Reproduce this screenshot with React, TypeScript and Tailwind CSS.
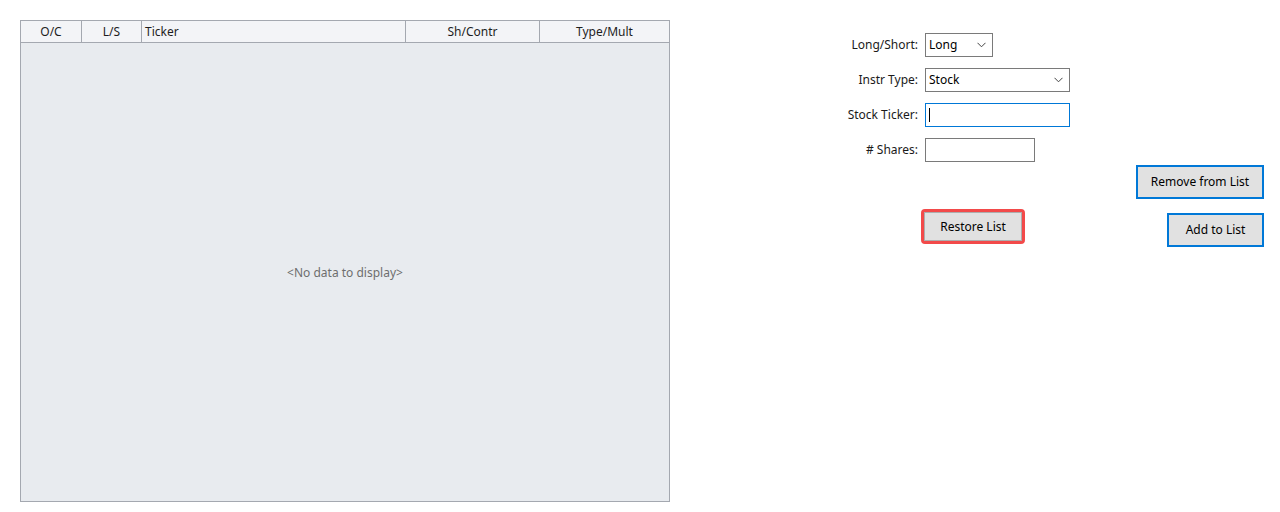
import type { ReactNode } from "react";

const FONT = { fontFamily: '"Segoe UI", "Noto Sans", "DejaVu Sans", sans-serif' };

const columns = [
  { label: "O/C", width: "w-[61px]", align: "text-center" },
  { label: "L/S", width: "w-[60px]", align: "text-center" },
  { label: "Ticker", width: "w-[264px]", align: "text-left pl-[3px]" },
  { label: "Sh/Contr", width: "w-[134px]", align: "text-center" },
  { label: "Type/Mult", width: "flex-1", align: "text-center" },
];

function Chevron() {
  return (
    <svg width="9" height="6" viewBox="0 0 9 6" className="text-[#444]">
      <polyline points="0.5,0.8 4.5,4.8 8.5,0.8" fill="none" stroke="currentColor" strokeWidth="1" />
    </svg>
  );
}

function FormRow({ label, children }: { label: string; children: ReactNode }) {
  return (
    <div className="flex items-center gap-[7px]">
      <div className="w-[248px] text-right text-[12px] text-[#1a1a1a]">{label}</div>
      {children}
    </div>
  );
}

function Select({ value, width }: { value: string; width: string }) {
  return (
    <div
      className={`flex h-[24px] ${width} items-center justify-between border border-[#7a7a7a] bg-white pl-[3px] pr-[6px] text-[12px] text-black`}
    >
      <span>{value}</span>
      <Chevron />
    </div>
  );
}

export default function App() {
  return (
    <div className="flex h-[512px] w-[1280px] bg-white" style={FONT}>
      <div className="ml-[20px] mt-[20px] flex h-[482px] w-[650px] flex-col border border-[#a4a8b0] bg-[#e8ebef]">
        <div className="flex h-[22px] border-b border-[#a4a8b0] bg-[#f3f4f7] text-[12px] text-[#1e1e1e]">
          {columns.map((col, i) => (
            <div
              key={col.label}
              className={`${col.width} ${col.align} leading-[22px] ${
                i < columns.length - 1 ? "border-r border-[#a4a8b0]" : ""
              }`}
            >
              {col.label}
            </div>
          ))}
        </div>
        <div className="flex flex-1 items-center justify-center pt-[2px] text-[12px] text-[#6e6e6e]">
          &lt;No data to display&gt;
        </div>
      </div>

      <div className="flex flex-1 flex-col pr-[16px] pt-[33px]">
        <div className="flex flex-col gap-[11px]">
          <FormRow label="Long/Short:">
            <Select value="Long" width="w-[68px]" />
          </FormRow>
          <FormRow label="Instr Type:">
            <Select value="Stock" width="w-[145px]" />
          </FormRow>
          <FormRow label="Stock Ticker:">
            <div className="flex h-[24px] w-[145px] items-center border border-[#0078d7] bg-white pl-[3px]">
              <div className="h-[14px] w-px bg-black" />
            </div>
          </FormRow>
          <FormRow label="# Shares:">
            <div className="h-[24px] w-[110px] border border-[#7a7a7a] bg-white" />
          </FormRow>
        </div>

        <div className="mt-[3px] flex justify-end">
          <button
            type="button"
            className="h-[34px] w-[128px] border-2 border-[#0078d7] bg-[#e1e1e1] text-[12px] text-black"
          >
            Remove from List
          </button>
        </div>

        <div className="mt-[10px] flex items-start justify-between">
          <div className="ml-[251px] rounded-[4px] border-[3px] border-[#f24a4a]">
            <button
              type="button"
              className="block h-[29px] w-[98px] border border-[#adadad] bg-[#e1e1e1] text-[12px] text-black"
            >
              Restore List
            </button>
          </div>
          <button
            type="button"
            className="mt-[4px] h-[34px] w-[97px] border-2 border-[#0078d7] bg-[#e1e1e1] text-[12px] text-black"
          >
            Add to List
          </button>
        </div>
      </div>
    </div>
  );
}
